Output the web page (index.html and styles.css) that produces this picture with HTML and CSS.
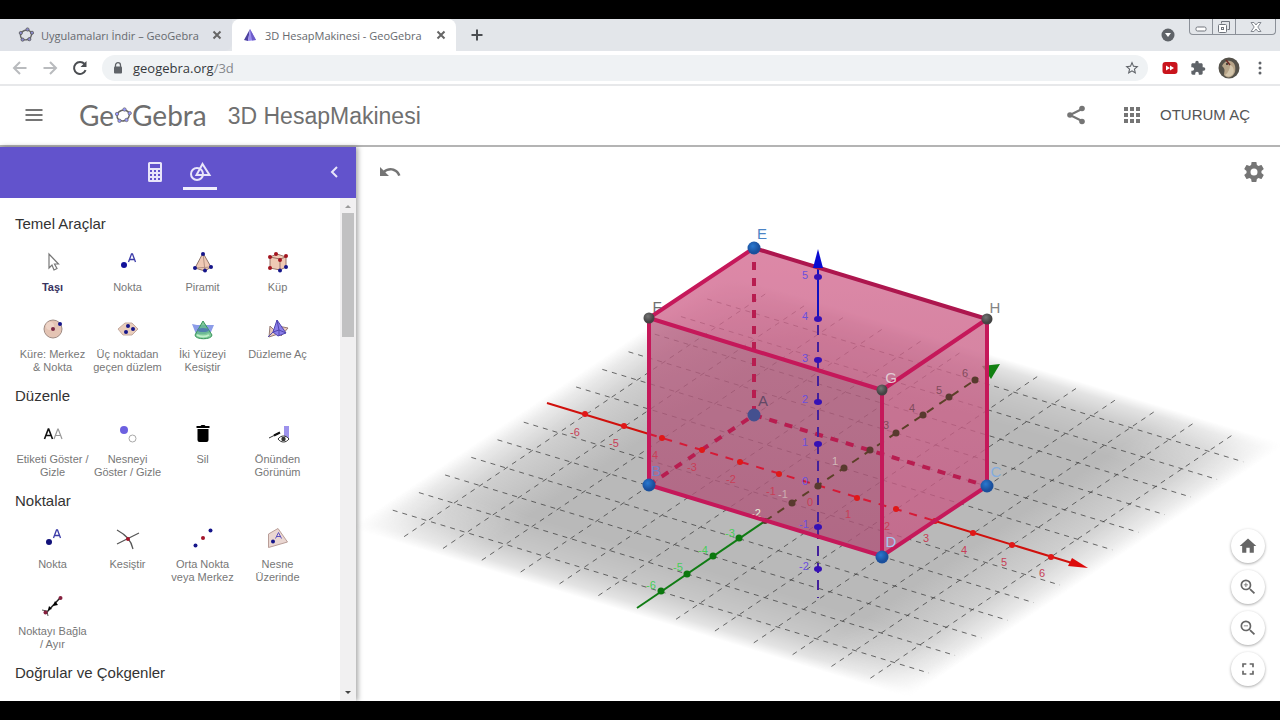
FILE: index.html
```html
<!DOCTYPE html>
<html lang="tr">
<head>
<meta charset="utf-8">
<title>3D HesapMakinesi - GeoGebra</title>
<link rel="stylesheet" href="styles.css">
</head>
<body>
<div class="tabstrip">
  <div class="tab">
    <svg class="tab-icon" viewBox="0 0 16 16"><ellipse cx="8" cy="8" rx="5.6" ry="4.8" fill="none" stroke="#666" stroke-width="1.4" transform="rotate(-20 8 8)"/><g fill="#8c8cd0" stroke="#555" stroke-width=".8"><circle cx="9.5" cy="2.5" r="1.6"/><circle cx="2.8" cy="6" r="1.6"/><circle cx="4.6" cy="12.6" r="1.6"/><circle cx="11.3" cy="12.2" r="1.6"/><circle cx="14" cy="5.8" r="1.6"/></g></svg>
    <span class="tab-title">Uygulamaları İndir – GeoGebra</span>
    <button class="tab-close" aria-label="Sekmeyi kapat"><svg viewBox="0 0 10 10"><path d="M1.5 1.5l7 7M8.5 1.5l-7 7"/></svg></button>
  </div>
  <div class="tab tab-active">
    <svg class="tab-icon" viewBox="0 0 16 16"><path d="M8 2L2 13l4 1z" fill="#4b3f9f"/><path d="M8 2L6 14l8-1z" fill="#9a8cf0"/><path d="M8 2l2 11.5 4-.5z" fill="#6d5cc8"/></svg>
    <span class="tab-title">3D HesapMakinesi - GeoGebra</span>
    <button class="tab-close" aria-label="Sekmeyi kapat"><svg viewBox="0 0 10 10"><path d="M1.5 1.5l7 7M8.5 1.5l-7 7"/></svg></button>
  </div>
  <button class="new-tab" aria-label="Yeni sekme"><svg viewBox="0 0 12 12"><path d="M6 .5v11M.5 6h11"/></svg></button>
  <div class="window-side">
    <svg class="tab-search" viewBox="0 0 14 14"><circle cx="7" cy="7" r="6.5" fill="#5f6368"/><path d="M4 5h6L7 9z" fill="#fff"/></svg>
    <div class="window-buttons">
      <button aria-label="Küçült"><svg width="14" height="14" viewBox="0 0 14 14"><rect x="2" y="7" width="10" height="4" rx="1.5" fill="#fff" stroke="#70757d"/></svg></button>
      <button aria-label="Önceki boyut"><svg width="14" height="14" viewBox="0 0 14 14"><path d="M4.500 3.500V1.500h8v8h-2" fill="none" stroke="#70757d"/><rect x="1.500" y="4.500" width="8" height="8" rx="1" fill="#fff" stroke="#70757d"/><rect x="4.500" y="7.500" width="2" height="2" fill="none" stroke="#70757d"/></svg></button>
      <button class="window-close" aria-label="Kapat"><svg width="14" height="14" viewBox="0 0 14 14"><path d="M2 2.500h3l2 2.500 2-2.500h3L8.800 7l3.200 4.500H9L7 9l-2 2.500H2L5.200 7z" fill="#fff" stroke="#858a92"/></svg></button>
    </div>
  </div>
</div>

<div class="toolbar">
  <button class="nav-button nav-dim" aria-label="Geri"><svg viewBox="0 0 16 16"><path d="M14.500 8H2M8 2L2 8l6 6"/></svg></button>
  <button class="nav-button nav-dim" aria-label="İleri"><svg viewBox="0 0 16 16"><path d="M1.500 8H14M8 2l6 6-6 6"/></svg></button>
  <button class="nav-button" aria-label="Yenile"><svg viewBox="0 0 16 16"><path d="M13.600 10.200A6 6 0 1 1 12.600 4" stroke-width="2"/><path d="M14.500 1v6H8.500z" fill="#4a4d51" stroke="none"/></svg></button>
  <div class="address">
    <svg class="lock" viewBox="0 0 10 12"><path d="M2.500 5V3.200a2.500 2.500 0 0 1 5 0V5" fill="none" stroke="#5f6368" stroke-width="1.300"/><rect x="1" y="4.500" width="8" height="7" rx="1" fill="#5f6368"/></svg>
    <span class="url">geogebra.org<span class="url-path">/3d</span></span>
    <svg class="star" viewBox="0 0 24 24"><path d="M22 9.240l-7.190-.62L12 2 9.190 8.630 2 9.240l5.460 4.730L5.820 21 12 17.270 18.180 21l-1.630-7.030L22 9.240zM12 15.400l-3.760 2.270 1-4.280-3.320-2.880 4.380-.38L12 6.100l1.710 4.040 4.380.38-3.320 2.880 1 4.280L12 15.400z" fill="#5f6368"/></svg>
  </div>
  <div class="extensions">
    <svg width="16" height="16" viewBox="0 0 16 16"><rect x=".5" y="2" width="15" height="12" rx="3" fill="#c9141d"/><path d="M4 5.500L8 8l-4 2.500zM8 5.500L12 8l-4 2.500z" fill="#fff"/></svg>
    <svg width="16" height="16" viewBox="0 0 24 24"><path d="M20.500 11H19V7c0-1.100-.9-2-2-2h-4V3.500a2.500 2.500 0 0 0-5 0V5H4c-1.100 0-2 .9-2 2v3.800h1.500a2.700 2.700 0 0 1 0 5.400H2V20c0 1.100.9 2 2 2h3.800v-1.500a2.700 2.700 0 0 1 5.400 0V22H17c1.100 0 2-.9 2-2v-4h1.500a2.500 2.500 0 0 0 0-5z" fill="#5f6368"/></svg>
    <svg class="avatar" viewBox="0 0 22 22"><circle cx="11" cy="11" r="10.500" fill="#55524a"/><path d="M4 9c2-4 5-6 8-5 5 1 6 6 5 11-2 6-8 7-11 3 0-4 2-5-2-9z" fill="#b7a488"/><path d="M12 8c3 1 5 5 3 9-2 3-6 3-8 1 3-2 5-6 5-10z" fill="#d3c5ab"/><path d="M8 3l4 5" stroke="#702c27" stroke-width="1.500"/><circle cx="9" cy="7" r="1" fill="#2e2824"/></svg>
    <svg width="16" height="16" viewBox="0 0 16 16" fill="#5f6368"><circle cx="8" cy="3" r="1.500"/><circle cx="8" cy="8" r="1.500"/><circle cx="8" cy="13" r="1.500"/></svg>
  </div>
</div>

<header class="app-header">
  <button class="menu-button" aria-label="Menü"><svg width="24" height="24" viewBox="0 0 24 24"><path d="M3.500 7h17M3.500 12h17M3.500 17h17" stroke="#757575" stroke-width="2"/></svg></button>
  <a class="logo" href="#" aria-label="GeoGebra">Ge<svg viewBox="0 0 18 18"><ellipse cx="9" cy="9.500" rx="6.300" ry="5.300" fill="none" stroke="#666" stroke-width="1.500" transform="rotate(-20 9 9)"/><g fill="#9999ff" stroke="#666" stroke-width=".7"><circle cx="10.500" cy="3.500" r="1.700"/><circle cx="3" cy="8" r="1.700"/><circle cx="5.500" cy="14.800" r="1.700"/><circle cx="12.500" cy="14" r="1.700"/><circle cx="15.700" cy="7.200" r="1.700"/></g></svg>Gebra</a>
  <h1 class="app-title">3D HesapMakinesi</h1>
  <div class="header-actions">
    <button aria-label="Paylaş"><svg width="24" height="24" viewBox="0 0 24 24"><path d="M6 12L18 6M6 12l12 6" stroke="#757575" stroke-width="2"/><g fill="#757575"><circle cx="6" cy="12" r="2.800"/><circle cx="18" cy="5.500" r="2.800"/><circle cx="18" cy="18.500" r="2.800"/></g></svg></button>
    <button aria-label="Uygulamalar"><svg width="24" height="24" viewBox="0 0 24 24"><path d="M4 4h4v4H4zm6 0h4v4h-4zm6 0h4v4h-4zM4 10h4v4H4zm6 0h4v4h-4zm6 0h4v4h-4zM4 16h4v4H4zm6 0h4v4h-4zm6 0h4v4h-4z" fill="#757575"/></svg></button>
    <button class="sign-in">OTURUM AÇ</button>
  </div>
</header>

<main class="workspace">
  <aside class="sidebar">
    <nav class="sidebar-tabs">
      <button class="mode" aria-label="Cebir"><svg width="24" height="24" viewBox="0 0 24 24"><path fill-rule="evenodd" d="M6.500 2h11A1.500 1.500 0 0 1 19 3.500v17a1.500 1.500 0 0 1-1.500 1.500h-11A1.500 1.500 0 0 1 5 20.500v-17A1.500 1.500 0 0 1 6.500 2zM7 4v4h10V4zM7 10v2h2v-2zm4 0v2h2v-2zm4 0v2h2v-2zm-8 4v2h2v-2zm4 0v2h2v-2zm4 0v2h2v-2zm-8 4v2h2v-2zm4 0v2h2v-2zm4 0v2h2v-2z" fill="#e8e5fa"/></svg></button>
      <button class="mode mode-active" aria-label="Araçlar"><svg width="24" height="24" viewBox="0 0 24 24" fill="none" stroke="#e8e5fa" stroke-width="2"><circle cx="9" cy="14" r="6"/><path d="M14.500 4L8.500 15h13z"/></svg></button>
      <button class="collapse" aria-label="Kapat"><svg width="24" height="24" viewBox="0 0 24 24"><path d="M15 7l-5 5 5 5" fill="none" stroke="#e8e5fa" stroke-width="2"/></svg></button>
    </nav>
    <div class="sidebar-body">
      <div class="tools">
        <h2>Temel Araçlar</h2>
        <div class="tool-grid">
          <button class="tool tool-selected"><svg viewBox="0 0 32 32"><path d="M12 8v14l3-3 2 5 3-1.500-2.500-4.500h4z" fill="#fff" stroke="#777" stroke-width="1.200"/></svg>Taşı</button>
          <button class="tool"><svg viewBox="0 0 32 32"><circle cx="12" cy="19" r="3" fill="#11119a"/><path d="M16.500 16L19.500 8h1l3 8M17.500 13.500h5" fill="none" stroke="#3b3ba8" stroke-width="1.300"/></svg>Nokta</button>
          <button class="tool"><svg viewBox="0 0 32 32"><path d="M16 7L8 22l10 3 6-4z" fill="#efc9b4" stroke="#8d7468"/><path d="M16 7l2 18M8 22l16-1" stroke="#a88878" stroke-width=".8"/><g fill="#15158a"><circle cx="16" cy="8" r="2"/><circle cx="8" cy="22" r="2"/><circle cx="18" cy="24.500" r="2"/><circle cx="24" cy="21" r="2"/></g></svg>Piramit</button>
          <button class="tool"><svg viewBox="0 0 32 32"><path d="M8 11l7-3 9 3v10l-6 3-10-2z" fill="#efc9b4" stroke="#9a756a"/><path d="M8 11l10 2 6-2M18 13v11" fill="none" stroke="#9a756a"/><g fill="#a3141e"><circle cx="8" cy="11" r="2"/><circle cx="14" cy="8" r="2"/><circle cx="24" cy="10" r="2"/><circle cx="18" cy="14" r="2"/><circle cx="8" cy="22" r="2"/></g><g fill="#15158a"><circle cx="18" cy="24.500" r="2"/><circle cx="24" cy="21" r="2"/></g></svg>Küp</button>
          <button class="tool"><svg viewBox="0 0 32 32"><circle cx="16" cy="16" r="9" fill="#e4c4b4" stroke="#a08c84"/><circle cx="13" cy="13" r="4" fill="#eed4c7"/><circle cx="16" cy="16" r="2" fill="#7a2944"/><circle cx="23" cy="11" r="2" fill="#15158a"/></svg>Küre: Merkez &amp; Nokta</button>
          <button class="tool"><svg viewBox="0 0 32 32"><path d="M6 16l7-6 7 0 6 6-6 6h-9z" fill="#e9cdbc" stroke="#c5aba0"/><g fill="#15158a"><circle cx="16" cy="13" r="2"/><circle cx="14" cy="19" r="2"/><circle cx="21" cy="16" r="2"/></g></svg>Üç noktadan geçen düzlem</button>
          <button class="tool"><svg viewBox="0 0 32 32"><path d="M5 11l5 1h17l-3 7-6 2H9z" fill="#8c9ce8"/><path d="M16 8l-8 14c0 5 17 5 17 0z" fill="#63be82" fill-opacity=".8" stroke="#38965b"/><ellipse cx="16" cy="17" rx="6" ry="2" fill="#527fae"/><path d="M10 22c3 2 9 2 12 0" stroke="#c0f0ca" stroke-width="2" fill="none"/></svg>İki Yüzeyi Kesiştir</button>
          <button class="tool"><svg viewBox="0 0 32 32"><path d="M8 13l8 8-9 3zM26 15l-7 8-3-10z" fill="#e7c8bc" stroke="#967a73"/><path d="M15 7l-4 12 5 4 8-3z" fill="#8b7ee8" stroke="#5046b0"/><path d="M15 7l2 10 7 3M11 19l6-2v6M6 24l5-5" fill="none" stroke="#5046b0"/></svg>Düzleme Aç</button>
        </div>
        <h2>Düzenle</h2>
        <div class="tool-grid">
          <button class="tool"><svg viewBox="0 0 32 32"><path d="M7.500 21l3.800-10h.4l3.800 10M9 17.500h5" fill="none" stroke="#111" stroke-width="1.600"/><path d="M17 21l3.800-10h.4L25 21M18.500 17.500h5" fill="none" stroke="#999" stroke-width="1.200"/></svg>Etiketi Göster / Gizle</button>
          <button class="tool"><svg viewBox="0 0 32 32"><circle cx="12" cy="12" r="4" fill="#6c60e0"/><circle cx="20.500" cy="20.500" r="3.500" fill="#fff" stroke="#aaa"/></svg>Nesneyi Göster / Gizle</button>
          <button class="tool"><svg viewBox="0 0 32 32"><path d="M9.500 8h4l1-1h3l1 1h4v2h-13zM10.500 11h11v11a2 2 0 0 1-2 2h-7a2 2 0 0 1-2-2z" fill="#000"/></svg>Sil</button>
          <button class="tool"><svg viewBox="0 0 32 32"><path d="M22 8h5v12h-5z" fill="#9d92ec"/><path d="M7 20l10-5" stroke="#333"/><path d="M12 17.500l6-3" stroke="#111" stroke-width="2"/><path d="M16 21c3-4 8-4 11 0-3 4-8 4-11 0z" fill="#fff" stroke="#333"/><circle cx="21.500" cy="21" r="2.200" fill="#333"/></svg>Önünden Görünüm</button>
        </div>
        <h2>Noktalar</h2>
        <div class="tool-grid">
          <button class="tool"><svg viewBox="0 0 32 32"><circle cx="12" cy="19" r="3" fill="#11117a"/><path d="M16.500 15L19.500 7h1l3 8M17.500 12.500h5" fill="none" stroke="#3b3ba8" stroke-width="1.300"/></svg>Nokta</button>
          <button class="tool"><svg viewBox="0 0 32 32"><path d="M5 7c9 5 14 10 16 19M5 21L27 10" fill="none" stroke="#555" stroke-width="1.200"/><circle cx="16" cy="16" r="2" fill="#a31429"/></svg>Kesiştir</button>
          <button class="tool"><svg viewBox="0 0 32 32"><circle cx="23.500" cy="7.500" r="2" fill="#15158a"/><circle cx="16" cy="15" r="2" fill="#a31429"/><circle cx="8.500" cy="22.500" r="2" fill="#15158a"/></svg>Orta Nokta veya Merkez</button>
          <button class="tool"><svg viewBox="0 0 32 32"><path d="M6.500 11L16 5.500 25.500 19 6.500 24.500z" fill="#ead7d2" stroke="#b99e98"/><circle cx="11" cy="18.500" r="2" fill="#15158a"/><path d="M13.500 15.500l3-6 3 6M14.500 13.500h4" fill="none" stroke="#5a4fc0"/></svg>Nesne Üzerinde</button>
          <button class="tool"><svg viewBox="0 0 32 32"><path d="M9 23L23 8" stroke="#222" stroke-width="1.500"/><path d="M11 20l4-1-3-3zM16 16l5-1-3-4z" fill="#000"/><path d="M5 20l5 1 1 5" stroke="#555" fill="none"/><circle cx="23.500" cy="8" r="2" fill="#85203e"/><circle cx="8.500" cy="22.500" r="2" fill="#85203e"/></svg>Noktayı Bağla / Ayır</button>
        </div>
        <h2>Doğrular ve Çokgenler</h2>
      </div>
      <div class="scrollbar" aria-hidden="true">
        <svg viewBox="0 0 16 15"><path d="M5 10h6L8 7z" fill="#9a9a9a"/></svg>
        <div class="scroll-thumb"></div>
        <svg class="scroll-down" viewBox="0 0 16 15"><path d="M5 5h6L8 8z" fill="#444"/></svg>
      </div>
    </div>
  </aside>

  <section class="view3d">
    <svg class="scene" viewBox="356 147 924 554" preserveAspectRatio="xMidYMid slice" role="img" aria-label="3D görünüm">
      <defs>
        <linearGradient id="fadeX"><stop offset="0" stop-color="#b9b9b9" stop-opacity="0"/><stop offset=".03" stop-color="#b9b9b9" stop-opacity=".3"/><stop offset=".09" stop-color="#b9b9b9" stop-opacity=".7"/><stop offset=".2" stop-color="#b9b9b9"/><stop offset=".8" stop-color="#b9b9b9"/><stop offset=".91" stop-color="#b9b9b9" stop-opacity=".7"/><stop offset=".97" stop-color="#b9b9b9" stop-opacity=".3"/><stop offset="1" stop-color="#b9b9b9" stop-opacity="0"/></linearGradient>
        <linearGradient id="fadeY" x2="0" y2="1"><stop offset="0" stop-color="#fff" stop-opacity="0"/><stop offset=".03" stop-color="#fff" stop-opacity=".4"/><stop offset=".09" stop-color="#fff" stop-opacity=".8"/><stop offset=".18" stop-color="#fff"/><stop offset=".82" stop-color="#fff"/><stop offset=".91" stop-color="#fff" stop-opacity=".8"/><stop offset=".97" stop-color="#fff" stop-opacity=".4"/><stop offset="1" stop-color="#fff" stop-opacity="0"/></linearGradient>
        <mask id="planeMask" maskUnits="userSpaceOnUse" x="-8" y="-8" width="16" height="16"><rect x="-7.200" y="-7.200" width="14.400" height="14.400" fill="url(#fadeY)"/></mask>
        <linearGradient id="topFace" x2="0" y2="1"><stop offset="0" stop-color="#d97c9d"/><stop offset="1" stop-color="#c86f90"/></linearGradient>
        <linearGradient id="frontFace" x2="0" y2="1"><stop offset="0" stop-color="#b46f89"/><stop offset=".5" stop-color="#ab6782"/><stop offset="1" stop-color="#a65d7c"/></linearGradient>
        <linearGradient id="sideFace" x2="0" y2="1"><stop offset="0" stop-color="#cf7897"/><stop offset="1" stop-color="#c4648a"/></linearGradient>
        <radialGradient id="bluePoint" cx=".4" cy=".35"><stop offset="0" stop-color="#2a78cf"/><stop offset="1" stop-color="#1a4f9c"/></radialGradient>
        <radialGradient id="grayPoint" cx=".4" cy=".35"><stop offset="0" stop-color="#747474"/><stop offset="1" stop-color="#444"/></radialGradient>
      </defs>
      <g transform="matrix(38.850 11.800 26.200 -17.600 818 486)">
        <rect x="-7.200" y="-7.200" width="14.400" height="14.400" fill="url(#fadeX)" mask="url(#planeMask)"/>
        <path class="grid" d="M-6-6.900V6.900M-5-6.900V6.900M-4-6.900V6.900M-3-6.900V6.900M-2-6.900V6.900M-1-6.900V6.900M1-6.900V6.900M2-6.900V6.900M3-6.900V6.900M4-6.900V6.900M5-6.900V6.900M6-6.900V6.900M-6.900-6H6.900M-6.900-5H6.900M-6.900-4H6.900M-6.900-3H6.900M-6.900-2H6.900M-6.900-1H6.900M-6.900 1H6.900M-6.900 2H6.900M-6.900 3H6.900M-6.900 4H6.900M-6.900 5H6.900M-6.900 6H6.900"/>
      </g>
      <path d="M1000 364l-18 2 9 13z" fill="#118011"/>
      <g fill-opacity=".74">
        <path d="M649 318L754 248 987 319 882 390z" fill="url(#topFace)"/>
        <path d="M649 318L882 390V556L649 485z" fill="url(#frontFace)"/>
        <path d="M882 390L987 319V486L882 556z" fill="url(#sideFace)"/>
      </g>
      <path d="M649 318L754 248 987 319V486L882 556 649 485z" fill="#c83770" fill-opacity=".2"/>
      <path class="hidden-edge" d="M754 262V415L649 485M754 415L987 486"/>
      <g fill="none" stroke-width="2">
        <path d="M547 403L649 434M935 521L1072 563" stroke="#d0100c"/>
        <path d="M649 434L935 521" stroke="#d51a36" stroke-dasharray="8 8"/>
        <path d="M637 608L765 521" stroke="#107c14"/>
        <path d="M765 521L978 378" stroke="#5c4028" stroke-dasharray="8 7"/>
        <path d="M818 265V319" stroke="#1010c0"/>
        <path d="M818 325V598" stroke="#43209b" stroke-dasharray="10 7"/>
      </g>
      <path d="M1088 568l-16-10-4 8z" fill="#dc0a0a"/>
      <g fill="#e01818"><circle cx="585" cy="414" r="3"/><circle cx="624" cy="426" r="3"/><circle cx="662" cy="438" r="3"/><circle cx="702" cy="450" r="3"/><circle cx="740" cy="462" r="3"/><circle cx="779" cy="474" r="3"/><circle cx="857" cy="498" r="3"/><circle cx="896" cy="509" r="3"/><circle cx="935" cy="521" r="3"/><circle cx="973" cy="533" r="3"/><circle cx="1012" cy="545" r="3"/><circle cx="1051" cy="557" r="3"/></g>
      <g fill="#0b780e"><circle cx="661" cy="591" r="3.500"/><circle cx="687" cy="574" r="3.500"/><circle cx="713" cy="556" r="3.500"/><circle cx="739" cy="538" r="3.500"/></g>
      <g fill="#583a2e"><circle cx="765" cy="521" r="3"/><circle cx="792" cy="503" r="3.500"/><circle cx="818" cy="486" r="3.500"/><circle cx="844" cy="468" r="3.500"/><circle cx="870" cy="450" r="3.500"/><circle cx="896" cy="433" r="3.500"/><circle cx="923" cy="415" r="3.500"/><circle cx="949" cy="397" r="3.500"/><circle cx="975" cy="380" r="3.500"/></g>
      <g fill="#3510b5"><ellipse cx="818" cy="277" rx="4" ry="3"/><ellipse cx="818" cy="319" rx="4" ry="3"/><ellipse cx="818" cy="360" rx="4" ry="3"/><ellipse cx="818" cy="402" rx="4" ry="3"/><ellipse cx="818" cy="444" rx="4" ry="3"/><ellipse cx="818" cy="527" rx="4" ry="3"/><ellipse cx="818" cy="569" rx="4" ry="3"/></g>
      <g class="tick tick-x"><text x="575" y="436">-6</text><text x="614" y="447">-5</text><text x="655" y="459">4</text><text x="692" y="471">-3</text><text x="731" y="483">-2</text><text x="771" y="495">-1</text><text x="810" y="506">0</text><text x="848" y="518">1</text><text x="887" y="530">2</text><text x="926" y="542">3</text><text x="964" y="554">4</text><text x="1004" y="566">5</text><text x="1042" y="577">6</text></g>
      <g class="tick tick-y"><text x="651" y="589">-6</text><text x="678" y="571">-5</text><text x="703" y="554">-4</text><text x="730" y="537">-3</text></g>
      <g class="tick tick-inner"><text x="886" y="429">3</text><text x="912" y="412">4</text><text x="939" y="394">5</text><text x="965" y="377">6</text></g>
      <g class="tick tick-z"><text x="805" y="279">5</text><text x="805" y="320">4</text><text x="805" y="362">3</text><text x="805" y="403">2</text><text x="805" y="446">1</text><text x="805" y="485">0</text><text x="804" y="528">-1</text><text x="804" y="570">-2</text></g>
      <g class="tick tick-light"><text x="756" y="517">-2</text><text x="783" y="498" fill-opacity=".5">-1</text><text x="835" y="465" fill-opacity=".6">1</text></g>
      <path class="edge edge-back" d="M754 248L987 319"/>
      <path class="edge" d="M754 248L649 318V485L882 556 987 486V319L882 390V556M649 318L882 390"/>
      <path d="M818 249l-5 19h10z" fill="#0a0ad0"/>
      <g class="point-label"><text x="762" y="239" fill="#4b84c6">E</text><text x="657" y="312" fill="#707070">F</text><text x="995" y="313" fill="#858585">H</text><text x="891" y="383" fill="#e1cad4">G</text><text x="763" y="406" fill="#634865">A</text><text x="656" y="476" fill="#7580c6">B</text><text x="996" y="477" fill="#83acdf">C</text><text x="891" y="547" fill="#a5c7f2">D</text></g>
      <g fill="url(#bluePoint)"><circle cx="754" cy="248" r="6.500"/><circle cx="649" cy="485" r="6.500"/><circle cx="987" cy="486" r="6.500"/><circle cx="882" cy="557" r="6.500"/></g>
      <circle cx="754" cy="415" r="6.500" fill="#44508f"/>
      <g fill="url(#grayPoint)"><circle cx="649" cy="318" r="5.500"/><circle cx="987" cy="319" r="5.500"/><circle cx="882" cy="390" r="5.500"/></g>
    </svg>
    <button class="undo" aria-label="Geri al"><svg width="24" height="24" viewBox="0 0 24 24"><path d="M12.500 8c-2.650 0-5.050.99-6.900 2.600L2 7v9h9l-3.620-3.620c1.390-1.160 3.160-1.880 5.120-1.880 3.540 0 6.550 2.310 7.600 5.500l2.370-.78C21.080 11.030 17.150 8 12.500 8z" fill="#757575"/></svg></button>
    <button class="settings" aria-label="Ayarlar"><svg width="24" height="24" viewBox="0 0 24 24"><path d="M19.430 12.980c.04-.32.07-.64.07-.98s-.03-.66-.07-.98l2.110-1.650c.19-.15.24-.42.12-.64l-2-3.460c-.12-.22-.39-.3-.61-.22l-2.490 1c-.52-.4-1.080-.73-1.690-.98l-.38-2.650C14.460 2.180 14.250 2 14 2h-4c-.25 0-.46.18-.49.42l-.38 2.650c-.61.25-1.170.59-1.690.98l-2.490-1c-.23-.09-.49 0-.61.22l-2 3.460c-.13.22-.07.49.12.64l2.110 1.650c-.04.32-.07.65-.07.98s.03.66.07.98l-2.110 1.650c-.19.15-.24.42-.12.64l2 3.460c.12.22.39.3.61.22l2.490-1c.52.4 1.080.73 1.690.98l.38 2.650c.03.24.24.42.49.42h4c.25 0 .46-.18.49-.42l.38-2.650c.61-.25 1.170-.59 1.690-.98l2.490 1c.23.09.49 0 .61-.22l2-3.460c.12-.22.07-.49-.12-.64l-2.110-1.650zM12 15.500a3.500 3.500 0 1 1 0-7 3.500 3.500 0 0 1 0 7z" fill="#757575"/></svg></button>
    <div class="zoom-buttons">
      <button aria-label="Standart görünüm"><svg viewBox="0 0 24 24"><path d="M10 20v-6h4v6h5v-8h3L12 3 2 12h3v8z"/></svg></button>
      <button aria-label="Yakınlaştır"><svg viewBox="0 0 24 24"><path d="M15.500 14h-.79l-.28-.27A6.471 6.471 0 0 0 16 9.500 6.500 6.500 0 1 0 9.500 16c1.610 0 3.090-.59 4.230-1.570l.27.28v.79l5 4.990L20.490 19l-4.990-5zm-6 0C7.010 14 5 11.990 5 9.500S7.010 5 9.500 5 14 7.010 14 9.500 11.990 14 9.500 14z"/><path d="M12 10h-2v2H9v-2H7V9h2V7h1v2h2v1z"/></svg></button>
      <button aria-label="Uzaklaştır"><svg viewBox="0 0 24 24"><path d="M15.500 14h-.79l-.28-.27A6.471 6.471 0 0 0 16 9.500 6.500 6.500 0 1 0 9.500 16c1.610 0 3.090-.59 4.230-1.570l.27.28v.79l5 4.990L20.490 19l-4.990-5zm-6 0C7.010 14 5 11.990 5 9.500S7.010 5 9.500 5 14 7.010 14 9.500 11.990 14 9.500 14zM7 9h5v1H7z"/></svg></button>
      <button aria-label="Tam ekran"><svg viewBox="0 0 24 24"><path d="M7 14H5v5h5v-2H7v-3zm-2-4h2V7h3V5H5v5zm12 7h-3v2h5v-5h-2v3zM14 5v2h3v3h2V5h-5z"/></svg></button>
    </div>
  </section>
</main>
</body>
</html>
```

FILE: styles.css
```css
* { box-sizing: border-box; }

body {
  margin: 0;
  height: 100vh;
  padding: 19px 0;
  background: #000;
  display: flex;
  flex-direction: column;
  font-family: "Liberation Sans", Arial, sans-serif;
  overflow: hidden;
}

button {
  border: 0;
  padding: 0;
  background: none;
  font: inherit;
  color: inherit;
  display: flex;
  align-items: center;
  justify-content: center;
}

svg { display: block; flex: none; }

/* Browser tabs */
.tabstrip {
  flex: none;
  height: 32px;
  display: flex;
  background: #e3e6ea;
}

.tab {
  width: 232px;
  padding: 0 8px 0 18px;
  display: flex;
  align-items: center;
  gap: 7px;
  background: #dfe2e8;
  border-radius: 0 0 8px 0;
  font: 11px "Open Sans", "Noto Sans", sans-serif;
  color: #66696e;
}

.tab-active {
  width: 224px;
  padding-left: 10px;
  background: #fff;
  border-radius: 8px 8px 0 0;
}

.tab-icon { width: 16px; height: 16px; }
.tab-title { flex: 1; white-space: nowrap; }
.tab-close { width: 14px; height: 16px; }
.tab-close svg { width: 10px; height: 10px; stroke: #666; stroke-width: 2; }
.new-tab { width: 42px; }
.new-tab svg { width: 12px; height: 12px; stroke: #4a4d51; stroke-width: 2; }

.window-side {
  margin-left: auto;
  padding-right: 4px;
  display: flex;
  gap: 14px;
}

.tab-search { width: 14px; height: 14px; align-self: center; }

.window-buttons {
  height: 16px;
  display: flex;
  border: 1px solid #8b9098;
  border-top: 0;
  border-radius: 0 0 4px 4px;
}

.window-buttons button { width: 23px; border-right: 1px solid #8b9098; }
.window-buttons .window-close { width: 39px; border-right: 0; }

/* Address bar */
.toolbar {
  flex: none;
  height: 35px;
  padding: 0 12px;
  display: flex;
  align-items: center;
  background: #fff;
  border-bottom: 2px solid #e7e8ea;
}

.nav-button { width: 16px; height: 16px; margin-right: 14px; }
.nav-button svg { width: 16px; height: 16px; fill: none; stroke: #4a4d51; stroke-width: 2; }
.nav-dim svg { stroke: #b9bbbe; }

.address {
  flex: 1;
  height: 26px;
  padding: 0 8px 0 11px;
  display: flex;
  align-items: center;
  gap: 10px;
  border-radius: 13px;
  background: #eff2f4;
  font: 13px "Open Sans", "Noto Sans", sans-serif;
  color: #36393d;
}

.lock { width: 10px; height: 12px; }
.url { flex: 1; }
.url-path { color: #85888c; }
.star { width: 16px; height: 16px; }
.extensions { margin-left: 14px; display: flex; align-items: center; gap: 12px; }
.avatar { width: 22px; height: 22px; }

/* Application header */
.app-header {
  flex: none;
  height: 61px;
  padding: 0 30px 2px 22px;
  display: flex;
  align-items: center;
  background: #fff;
  border-bottom: 2px solid #b4b4b4;
  color: #666;
}

.menu-button { width: 24px; }

.logo {
  margin-left: 33px;
  display: flex;
  align-items: center;
  font: 400 28px/32px Lato, sans-serif;
  color: #6e6e6e;
  text-decoration: none;
}

.logo svg { width: 18px; height: 18px; }
.app-title { margin: 0 0 0 21px; padding-top: 4px; font-size: 23px; font-weight: 400; color: #707070; }
.header-actions { margin-left: auto; display: flex; align-items: center; gap: 32px; }
.header-actions .sign-in { margin-left: -16px; font-size: 15px; color: #555; }

/* Tool panel */
.workspace { flex: 1; min-height: 0; display: flex; background: #fff; }

.sidebar {
  flex: none;
  width: 356px;
  display: flex;
  flex-direction: column;
  z-index: 1;
  box-shadow: 2px 0 5px rgba(0, 0, 0, .35);
}

.sidebar-tabs {
  flex: none;
  height: 51px;
  padding: 9px 10px 8px 138px;
  display: flex;
  gap: 11px;
  background: #6253cc;
}

.mode { width: 34px; border-bottom: 3px solid transparent; }
.mode-active { border-color: #f0eefc; }
.collapse { margin-left: auto; height: 32px; }

.sidebar-body { flex: 1; min-height: 0; display: flex; background: #fff; }

.tools {
  flex: 1;
  min-width: 0;
  padding: 10px 15px 0;
  overflow: hidden;
}

.tools h2 {
  margin: 0 0 6px;
  font-size: 15px;
  font-weight: 400;
  line-height: 32px;
  color: #333;
}

.tool-grid { display: grid; grid-template-columns: repeat(4, 75px); }

.tool {
  height: 67px;
  padding: 0 1px;
  flex-direction: column;
  justify-content: flex-start;
  gap: 3px;
  font-size: 11px;
  line-height: 13px;
  color: #777;
}

.tool svg { width: 32px; height: 32px; }
.tool-selected { font-weight: 700; color: #37335f; }

.scrollbar {
  width: 16px;
  display: flex;
  flex-direction: column;
  background: #f1f0f1;
}

.scrollbar svg { width: 16px; height: 15px; }
.scroll-thumb { height: 124px; margin: 0 2px; background: #c1c1c2; }
.scroll-down { margin-top: auto; }

/* 3D view */
.view3d { flex: 1; min-width: 0; position: relative; }
.scene { width: 100%; height: 100%; }

.grid {
  fill: none;
  stroke: #3c3c3c;
  stroke-opacity: .75;
  stroke-width: 1;
  stroke-dasharray: 5 5;
  vector-effect: non-scaling-stroke;
}

.hidden-edge { fill: none; stroke: #b81d50; stroke-width: 4; stroke-dasharray: 8 8; }
.edge { fill: none; stroke: #c5185a; stroke-width: 4; stroke-linejoin: round; }
.edge-back { stroke: #ad164e; }
.tick { font-size: 11px; text-anchor: middle; }
.tick-x { fill: #c83e56; }
.tick-y { fill: #48ce59; }
.tick-z { fill: #6b50dd; }
.tick-inner { fill: #814b5c; }
.tick-light { fill: #e8eedb; }
.point-label { font-size: 15px; text-anchor: middle; }

.undo { position: absolute; top: 13px; left: 22px; }
.settings { position: absolute; top: 13px; right: 14px; }

.zoom-buttons {
  position: absolute;
  right: 15px;
  bottom: 15px;
  display: flex;
  flex-direction: column;
  gap: 7px;
}

.zoom-buttons button {
  width: 34px;
  height: 34px;
  border-radius: 50%;
  background: #fff;
  box-shadow: 0 1px 3px rgba(0, 0, 0, .35);
}

.zoom-buttons svg { width: 20px; height: 20px; fill: #666; }
```
